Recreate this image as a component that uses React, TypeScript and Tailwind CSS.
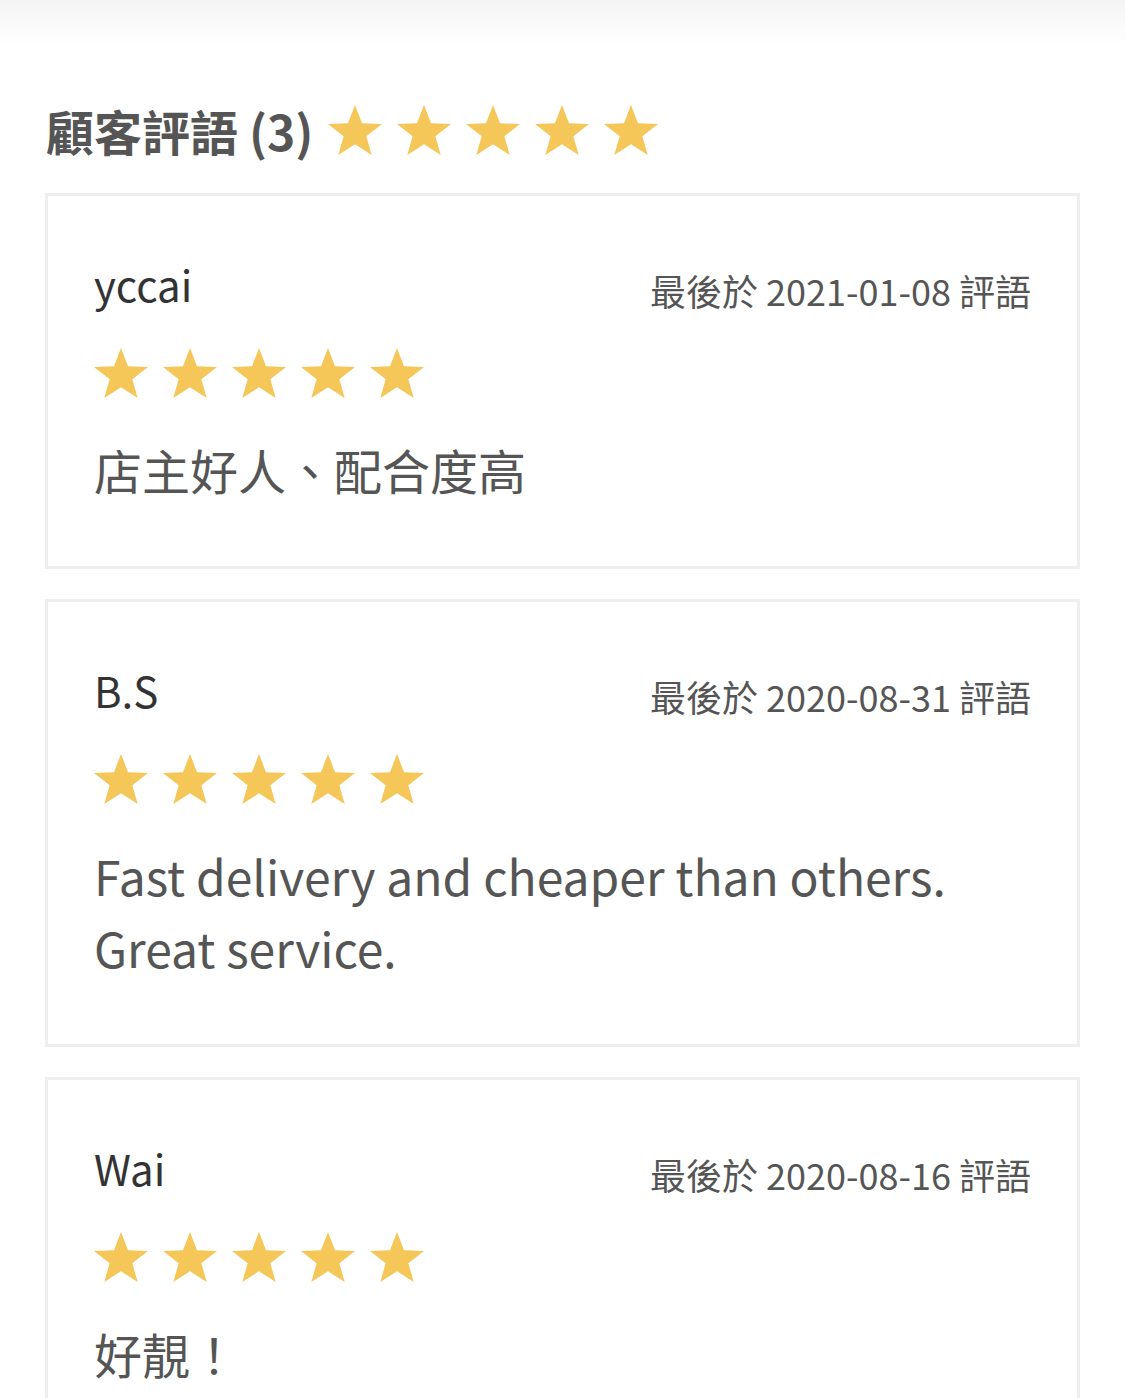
import React from 'react';

const reviews = [
  { name: 'yccai', date: '2021-01-08', text: '店主好人、配合度高' },
  { name: 'B.S', date: '2020-08-31', text: 'Fast delivery and cheaper than others. Great service.' },
  { name: 'Wai', date: '2020-08-16', text: '好靚！' },
];

const Star = () => (
  <svg width="54" height="50" viewBox="2.45 0 95.1 90.45" preserveAspectRatio="none" className="shrink-0">
    <polygon
      fill="#f5c658"
      points="50,0 62.34,33.01 97.55,34.55 69.97,56.49 79.39,90.45 50,71 20.61,90.45 30.03,56.49 2.45,34.55 37.66,33.01"
    />
  </svg>
);

const Stars = () => (
  <div className="flex gap-[15px]">
    {[0, 1, 2, 3, 4].map((i) => (
      <Star key={i} />
    ))}
  </div>
);

export default function App() {
  return (
    <div
      className="min-h-screen bg-white"
      style={{ fontFamily: '"Noto Sans CJK TC", "Noto Sans", sans-serif' }}
    >
      {/* header shadow */}
      <div className="h-[45px] bg-linear-to-b from-[#f4f4f4] to-white" />

      <div className="px-[45px] pt-[55px]">
        {/* title */}
        <div className="flex items-center mb-[33px] h-[60px]">
          <h2 className="text-[48px] leading-[60px] font-bold text-[#555555] pl-[1px]">顧客評語 (3)</h2>
          <div className="ml-[14px]">
            <Stars />
          </div>
        </div>

        {/* review cards */}
        <div className="flex flex-col gap-[30px]">
          {reviews.map((r) => (
            <div key={r.name} className="border-[3px] border-[#eeeeee] px-[46px] pt-[64px] pb-[61px]">
              <div className="flex items-center justify-between h-[48px]">
                <span className="text-[42px] leading-[48px] text-[#333333]">{r.name}</span>
                <span className="text-[36px] leading-[48px] text-[#555555] mt-[12px]">最後於 {r.date} 評語</span>
              </div>
              <div className="mt-[40px]">
                <Stars />
              </div>
              <p className="mt-[35px] text-[48px] leading-[72px] text-[#555555] pr-[80px]">{r.text}</p>
            </div>
          ))}
        </div>
      </div>
    </div>
  );
}
